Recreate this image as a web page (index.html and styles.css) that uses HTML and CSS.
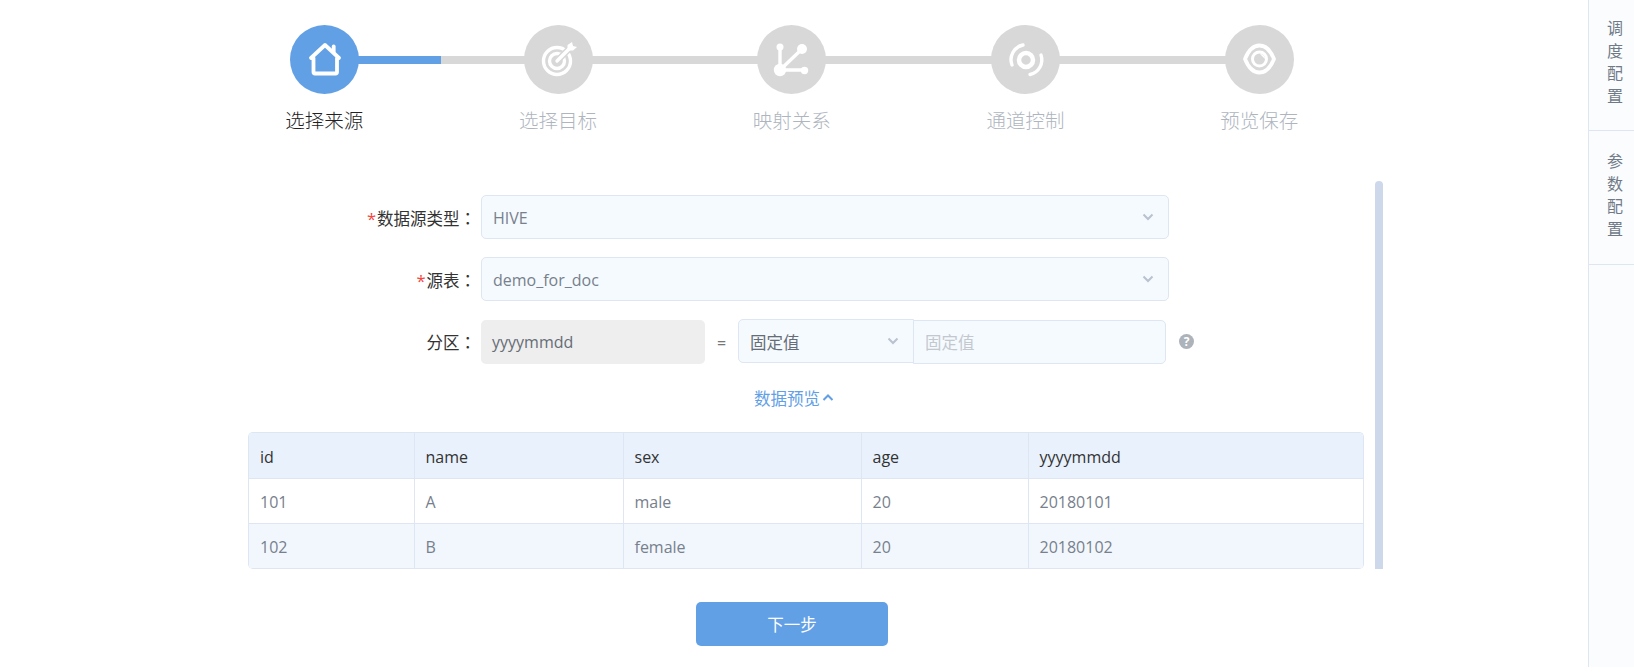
FILE: index.html
```html
<!DOCTYPE html>
<html lang="zh-CN">
<head>
  <meta charset="UTF-8" />
  <title>配置</title>
  <link rel="stylesheet" href="styles.css">
</head>
<body>

<div class="page">
  <main class="main">

    <!-- steps -->
    <div class="steps">
      <div class="step active">
        <div class="step-dot">
          <svg class="step-icon home" viewBox="0 0 69 69">
            <path d="M21 33 L35 20 L49 33 M23.5 33 V47 Q23.5 48.5 25 48.5 H45.500 Q47 48.5 47 47 V33" />
            <path d="M43.7 21.500 V27" />
          </svg>
        </div>
        <div class="step-name">选择来源</div>
      </div>
      <div class="step">
        <div class="step-dot">
          <svg class="step-icon" viewBox="0 0 69 69">
            <circle cx="33" cy="36" r="13.5" />
            <circle cx="33" cy="36" r="7.5" />
            <path class="cut" d="M34 35 L50 19" />
            <path d="M33 36 L47 22" />
            <path class="fill" d="M43.500 20 L43.500 25.500 L49 25.500 L53 22 L49 21 L48 17 Z" />
          </svg>
        </div>
        <div class="step-name">选择目标</div>
      </div>
      <div class="step">
        <div class="step-dot">
          <svg class="step-icon" viewBox="0 0 69 69">
            <path d="M23 22 V45 L45 24 M23 45 H47" />
            <circle class="fill" cx="23" cy="22" r="3.5" />
            <circle class="fill" cx="45" cy="24" r="5" />
            <circle class="fill" cx="23" cy="45" r="6.2" />
            <circle class="fill" cx="47.5" cy="45.5" r="3.7" />
          </svg>
        </div>
        <div class="step-name">映射关系</div>
      </div>
      <div class="step">
        <div class="step-dot">
          <svg class="step-icon channel" viewBox="0 0 69 69">
            <circle class="core" cx="35" cy="35" r="7" />
            <path d="M21 40 A15 15 0 0 1 32 20" />
            <path d="M50 30 A15 15 0 0 1 39 49.5" />
          </svg>
        </div>
        <div class="step-name">通道控制</div>
      </div>
      <div class="step">
        <div class="step-dot">
          <svg class="step-icon eye" viewBox="0 0 69 69">
            <path d="M20 34 C24 24 29 20.500 34.500 20.500 C40 20.500 45 24 49 34 C45 44 40 47.500 34.500 47.500 C29 47.500 24 44 20 34 Z" />
            <circle class="ring" cx="34.5" cy="34" r="7" />
            <path class="fill" d="M35 29 A5 5 0 0 1 40 34 Z" />
          </svg>
        </div>
        <div class="step-name">预览保存</div>
      </div>
    </div>

    <!-- form + preview -->
    <div class="scroll">
      <div class="form-row">
        <label class="form-label"><span class="req">*</span>数据源类型<span class="colon" lang="zh-TW">：</span></label>
        <div class="select wide">
          <span>HIVE</span>
          <svg class="chevron" viewBox="0 0 12 8"><path d="M1.5 1.5 L6 6 L10.500 1.500" /></svg>
        </div>
      </div>
      <div class="form-row">
        <label class="form-label"><span class="req">*</span>源表<span class="colon" lang="zh-TW">：</span></label>
        <div class="select wide">
          <span>demo_for_doc</span>
          <svg class="chevron" viewBox="0 0 12 8"><path d="M1.5 1.5 L6 6 L10.500 1.500" /></svg>
        </div>
      </div>
      <div class="form-row">
        <label class="form-label">分区<span class="colon" lang="zh-TW">：</span></label>
        <div class="partition-key">yyyymmdd</div>
        <div class="equals">=</div>
        <div class="partition-group">
          <div class="select type">
            <span>固定值</span>
            <svg class="chevron" viewBox="0 0 12 8"><path d="M1.5 1.5 L6 6 L10.500 1.500" /></svg>
          </div>
          <div class="value-input">固定值</div>
        </div>
        <div class="help">?</div>
      </div>

      <div class="preview-toggle">
        <a>数据预览</a>
        <svg class="caret" viewBox="0 0 12 8"><path d="M1.5 6 L6 1.5 L10.500 6" /></svg>
      </div>

      <div class="table-wrap">
        <table>
          <colgroup>
            <col class="c1"><col class="c2"><col class="c3"><col class="c4"><col class="c5">
          </colgroup>
          <thead>
            <tr><th>id</th><th>name</th><th>sex</th><th>age</th><th>yyyymmdd</th></tr>
          </thead>
          <tbody>
            <tr><td>101</td><td>A</td><td>male</td><td>20</td><td>20180101</td></tr>
            <tr><td>102</td><td>B</td><td>female</td><td>20</td><td>20180102</td></tr>
          </tbody>
        </table>
      </div>

      <div class="scrollbar"></div>
    </div>

    <div class="actions">
      <button class="btn-next">下一步</button>
    </div>
  </main>

  <aside class="side">
    <div class="side-tab">调度配置</div>
    <div class="side-tab">参数配置</div>
  </aside>
</div>

</body>
</html>
```

FILE: styles.css
```css
* {
  box-sizing: border-box;
}

html, body {
  margin: 0;
  padding: 0;
  background: #fff;
  overflow: hidden;
}

body {
  font-family: "Open Sans", "Noto Sans CJK SC", sans-serif;
  font-size: 16px;
  color: #333;
}

.page {
  display: flex;
  height: 667px;
}

.main {
  flex: 1;
  min-width: 0;
}

/* steps */
.steps {
  position: relative;
  display: flex;
  margin-left: 207.500px;
  padding-top: 25px;
}

.steps::before {
  content: "";
  position: absolute;
  top: 56px;
  left: 117px;
  width: 935px;
  height: 8px;
  background: linear-gradient(to right, #62a0e6 116.500px, #d8d8d8 116.500px);
}

.step {
  position: relative;
  flex: 0 0 233.750px;
  display: flex;
  flex-direction: column;
  align-items: center;
}

.step-dot {
  width: 69px;
  height: 69px;
  border-radius: 50%;
  background: #d8d8d8;
}

.step.active .step-dot {
  background: #62a0e6;
}

.step-icon {
  display: block;
  width: 69px;
  height: 69px;
  fill: none;
  stroke: #fff;
  stroke-width: 3.4;
  stroke-linecap: round;
  stroke-linejoin: round;
}

.step-icon.home {
  stroke-width: 3.8;
}

.step-icon .fill {
  fill: #fff;
  stroke: none;
}

.step-icon .cut {
  stroke: #d8d8d8;
  stroke-width: 6.500;
}

.step-icon .core {
  stroke-width: 4.500;
}

.step-icon.eye {
  stroke-width: 3.8;
}

.step-icon .ring {
  stroke-width: 3;
}

.step-name {
  margin-top: 13px;
  font-size: 19.500px;
  font-weight: 300;
  line-height: 28px;
  color: #aeb5be;
}

.step.active .step-name {
  color: #222;
}

/* form */
.scroll {
  position: relative;
  width: 1135px;
  height: 388px;
  margin: 46px 0 0 248px;
  padding-top: 14px;
}

.form-row {
  display: flex;
  align-items: center;
  height: 44px;
  margin-bottom: 18px;
}

.form-label {
  flex: 0 0 233px;
  padding: 1px 5px 0 0;
  text-align: right;
  color: #333;
  font-size: 16.500px;
}

.req {
  color: #f5443c;
  margin-right: 1px;
}

.colon {
  font-family: "Noto Sans CJK TC", sans-serif;
}

.select {
  display: flex;
  align-items: center;
  justify-content: space-between;
  height: 44px;
  padding: 0 14px 0 11px;
  background: #f5fafe;
  border: 1px solid #dde6f2;
  border-radius: 5px;
  color: #77808c;
}

.select span {
  padding-top: 2px;
}

.select.wide {
  width: 688px;
}

.select.type {
  width: 176px;
  border-radius: 5px 0 0 5px;
  color: #666d76;
  font-size: 16.500px;
}

.chevron, .caret {
  width: 12px;
  height: 8px;
  fill: none;
  stroke: #b9c2ce;
  stroke-width: 2;
}

.caret {
  stroke: #62a0e6;
  margin-left: 2px;
}

.partition-key {
  display: flex;
  align-items: center;
  width: 224px;
  height: 44px;
  padding-left: 11px;
  background: #eee;
  border-radius: 5px;
  color: #666d76;
  margin-top: 2px;
}

.equals {
  width: 33px;
  text-align: center;
  color: #777;
  margin-top: 4px;
}

.partition-group {
  display: flex;
  align-items: flex-start;
  height: 44px;
}

.value-input {
  display: flex;
  align-items: center;
  width: 253px;
  height: 44px;
  margin: 1px 0 0 -1px;
  padding-left: 11px;
  background: #f5fafe;
  border: 1px solid #dde6f2;
  border-radius: 0 5px 5px 0;
  color: #c3c8cf;
  font-size: 16.500px;
}

.help {
  width: 15px;
  height: 15px;
  margin-left: 13px;
  border-radius: 50%;
  background: #adb3ba;
  color: #fff;
  font-size: 12px;
  font-weight: bold;
  line-height: 15px;
  text-align: center;
}

.preview-toggle {
  display: flex;
  align-items: center;
  height: 24px;
  margin: 23px 0 0 506px;
  color: #62a0e6;
  font-size: 16.500px;
}

/* preview table */
.table-wrap {
  width: 1116px;
  height: 137px;
  margin-top: 22px;
  border: 1px solid #dde6f2;
  border-bottom: none;
  border-radius: 5px;
  overflow: hidden;
}

table {
  width: 100%;
  border-collapse: collapse;
  table-layout: fixed;
}

.c1 { width: 165px; }
.c2 { width: 209px; }
.c3 { width: 238px; }
.c4 { width: 167px; }

th, td {
  height: 45px;
  padding: 2px 11px 0;
  text-align: left;
  font-weight: normal;
  border-right: 1px solid #dde6f2;
  border-bottom: 1px solid #dde6f2;
}

th:last-child, td:last-child {
  border-right: none;
}

th {
  padding-top: 3px;
  background: #e9f1fc;
  color: #333;
}

td {
  color: #77808c;
}

tbody tr:nth-child(2) td {
  background: #f2f7fe;
}

.scrollbar {
  position: absolute;
  top: 0;
  right: 0;
  bottom: 0;
  width: 8px;
  background: #cdd9ea;
  border-radius: 4px 4px 0 0;
}

/* next */
.actions {
  margin: 33px 0 0 696px;
}

.btn-next {
  display: block;
  width: 192px;
  height: 44px;
  border: none;
  border-radius: 5px;
  background: #62a0e6;
  color: #fff;
  font-family: inherit;
  font-size: 16.500px;
}

/* right side */
.side {
  flex: 0 0 46px;
  background: #fafcfe;
  border-left: 1px solid #dde6f2;
}

.side-tab {
  height: 134px;
  padding: 19px 11px 0 18px;
  text-align: center;
  font-size: 16px;
  line-height: 22.500px;
  color: #707a87;
  border-bottom: 1px solid #dde6f2;
}

.side-tab:first-child {
  height: 131px;
  padding-top: 17px;
}
```
